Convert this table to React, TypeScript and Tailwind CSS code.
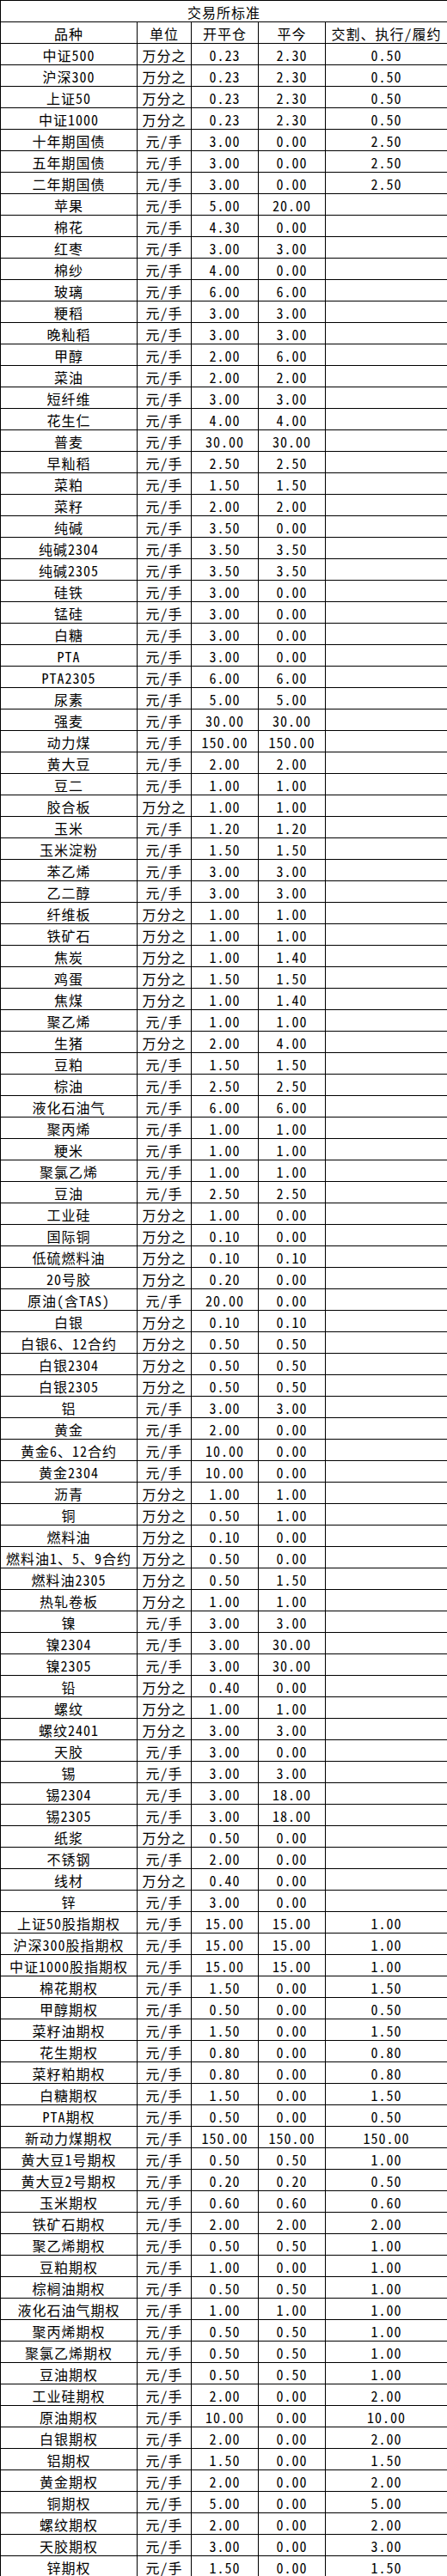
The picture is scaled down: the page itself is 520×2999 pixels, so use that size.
const rows: [string, string, string, string, string][] = [
  ["中证500", "万分之", "0.23", "2.30", "0.50"],
  ["沪深300", "万分之", "0.23", "2.30", "0.50"],
  ["上证50", "万分之", "0.23", "2.30", "0.50"],
  ["中证1000", "万分之", "0.23", "2.30", "0.50"],
  ["十年期国债", "元/手", "3.00", "0.00", "2.50"],
  ["五年期国债", "元/手", "3.00", "0.00", "2.50"],
  ["二年期国债", "元/手", "3.00", "0.00", "2.50"],
  ["苹果", "元/手", "5.00", "20.00", ""],
  ["棉花", "元/手", "4.30", "0.00", ""],
  ["红枣", "元/手", "3.00", "3.00", ""],
  ["棉纱", "元/手", "4.00", "0.00", ""],
  ["玻璃", "元/手", "6.00", "6.00", ""],
  ["粳稻", "元/手", "3.00", "3.00", ""],
  ["晚籼稻", "元/手", "3.00", "3.00", ""],
  ["甲醇", "元/手", "2.00", "6.00", ""],
  ["菜油", "元/手", "2.00", "2.00", ""],
  ["短纤维", "元/手", "3.00", "3.00", ""],
  ["花生仁", "元/手", "4.00", "4.00", ""],
  ["普麦", "元/手", "30.00", "30.00", ""],
  ["早籼稻", "元/手", "2.50", "2.50", ""],
  ["菜粕", "元/手", "1.50", "1.50", ""],
  ["菜籽", "元/手", "2.00", "2.00", ""],
  ["纯碱", "元/手", "3.50", "0.00", ""],
  ["纯碱2304", "元/手", "3.50", "3.50", ""],
  ["纯碱2305", "元/手", "3.50", "3.50", ""],
  ["硅铁", "元/手", "3.00", "0.00", ""],
  ["锰硅", "元/手", "3.00", "0.00", ""],
  ["白糖", "元/手", "3.00", "0.00", ""],
  ["PTA", "元/手", "3.00", "0.00", ""],
  ["PTA2305", "元/手", "6.00", "6.00", ""],
  ["尿素", "元/手", "5.00", "5.00", ""],
  ["强麦", "元/手", "30.00", "30.00", ""],
  ["动力煤", "元/手", "150.00", "150.00", ""],
  ["黄大豆", "元/手", "2.00", "2.00", ""],
  ["豆二", "元/手", "1.00", "1.00", ""],
  ["胶合板", "万分之", "1.00", "1.00", ""],
  ["玉米", "元/手", "1.20", "1.20", ""],
  ["玉米淀粉", "元/手", "1.50", "1.50", ""],
  ["苯乙烯", "元/手", "3.00", "3.00", ""],
  ["乙二醇", "元/手", "3.00", "3.00", ""],
  ["纤维板", "万分之", "1.00", "1.00", ""],
  ["铁矿石", "万分之", "1.00", "1.00", ""],
  ["焦炭", "万分之", "1.00", "1.40", ""],
  ["鸡蛋", "万分之", "1.50", "1.50", ""],
  ["焦煤", "万分之", "1.00", "1.40", ""],
  ["聚乙烯", "元/手", "1.00", "1.00", ""],
  ["生猪", "万分之", "2.00", "4.00", ""],
  ["豆粕", "元/手", "1.50", "1.50", ""],
  ["棕油", "元/手", "2.50", "2.50", ""],
  ["液化石油气", "元/手", "6.00", "6.00", ""],
  ["聚丙烯", "元/手", "1.00", "1.00", ""],
  ["粳米", "元/手", "1.00", "1.00", ""],
  ["聚氯乙烯", "元/手", "1.00", "1.00", ""],
  ["豆油", "元/手", "2.50", "2.50", ""],
  ["工业硅", "万分之", "1.00", "0.00", ""],
  ["国际铜", "万分之", "0.10", "0.00", ""],
  ["低硫燃料油", "万分之", "0.10", "0.10", ""],
  ["20号胶", "万分之", "0.20", "0.00", ""],
  ["原油(含TAS)", "元/手", "20.00", "0.00", ""],
  ["白银", "万分之", "0.10", "0.10", ""],
  ["白银6、12合约", "万分之", "0.50", "0.50", ""],
  ["白银2304", "万分之", "0.50", "0.50", ""],
  ["白银2305", "万分之", "0.50", "0.50", ""],
  ["铝", "元/手", "3.00", "3.00", ""],
  ["黄金", "元/手", "2.00", "0.00", ""],
  ["黄金6、12合约", "元/手", "10.00", "0.00", ""],
  ["黄金2304", "元/手", "10.00", "0.00", ""],
  ["沥青", "万分之", "1.00", "1.00", ""],
  ["铜", "万分之", "0.50", "1.00", ""],
  ["燃料油", "万分之", "0.10", "0.00", ""],
  ["燃料油1、5、9合约", "万分之", "0.50", "0.00", ""],
  ["燃料油2305", "万分之", "0.50", "1.50", ""],
  ["热轧卷板", "万分之", "1.00", "1.00", ""],
  ["镍", "元/手", "3.00", "3.00", ""],
  ["镍2304", "元/手", "3.00", "30.00", ""],
  ["镍2305", "元/手", "3.00", "30.00", ""],
  ["铅", "万分之", "0.40", "0.00", ""],
  ["螺纹", "万分之", "1.00", "1.00", ""],
  ["螺纹2401", "万分之", "3.00", "3.00", ""],
  ["天胶", "元/手", "3.00", "0.00", ""],
  ["锡", "元/手", "3.00", "3.00", ""],
  ["锡2304", "元/手", "3.00", "18.00", ""],
  ["锡2305", "元/手", "3.00", "18.00", ""],
  ["纸浆", "万分之", "0.50", "0.00", ""],
  ["不锈钢", "元/手", "2.00", "0.00", ""],
  ["线材", "万分之", "0.40", "0.00", ""],
  ["锌", "元/手", "3.00", "0.00", ""],
  ["上证50股指期权", "元/手", "15.00", "15.00", "1.00"],
  ["沪深300股指期权", "元/手", "15.00", "15.00", "1.00"],
  ["中证1000股指期权", "元/手", "15.00", "15.00", "1.00"],
  ["棉花期权", "元/手", "1.50", "0.00", "1.50"],
  ["甲醇期权", "元/手", "0.50", "0.00", "0.50"],
  ["菜籽油期权", "元/手", "1.50", "0.00", "1.50"],
  ["花生期权", "元/手", "0.80", "0.00", "0.80"],
  ["菜籽粕期权", "元/手", "0.80", "0.00", "0.80"],
  ["白糖期权", "元/手", "1.50", "0.00", "1.50"],
  ["PTA期权", "元/手", "0.50", "0.00", "0.50"],
  ["新动力煤期权", "元/手", "150.00", "150.00", "150.00"],
  ["黄大豆1号期权", "元/手", "0.50", "0.50", "1.00"],
  ["黄大豆2号期权", "元/手", "0.20", "0.20", "0.50"],
  ["玉米期权", "元/手", "0.60", "0.60", "0.60"],
  ["铁矿石期权", "元/手", "2.00", "2.00", "2.00"],
  ["聚乙烯期权", "元/手", "0.50", "0.50", "1.00"],
  ["豆粕期权", "元/手", "1.00", "0.00", "1.00"],
  ["棕榈油期权", "元/手", "0.50", "0.50", "1.00"],
  ["液化石油气期权", "元/手", "1.00", "1.00", "1.00"],
  ["聚丙烯期权", "元/手", "0.50", "0.50", "1.00"],
  ["聚氯乙烯期权", "元/手", "0.50", "0.50", "1.00"],
  ["豆油期权", "元/手", "0.50", "0.50", "1.00"],
  ["工业硅期权", "元/手", "2.00", "0.00", "2.00"],
  ["原油期权", "元/手", "10.00", "0.00", "10.00"],
  ["白银期权", "元/手", "2.00", "0.00", "2.00"],
  ["铝期权", "元/手", "1.50", "0.00", "1.50"],
  ["黄金期权", "元/手", "2.00", "0.00", "2.00"],
  ["铜期权", "元/手", "5.00", "0.00", "5.00"],
  ["螺纹期权", "元/手", "2.00", "0.00", "2.00"],
  ["天胶期权", "元/手", "3.00", "0.00", "3.00"],
  ["锌期权", "元/手", "1.50", "0.00", "1.50"],
];

const cell = "border border-black p-0 pt-[2px] text-center align-middle leading-[20px] whitespace-nowrap";

export default function App() {
  return (
    <div className="w-[520px] bg-white text-black">
      <table className="w-[520px] table-fixed border-collapse text-[16px] tracking-[1px] font-['Noto_Sans_Mono_CJK_SC','Noto_Sans_CJK_SC',sans-serif]">
        <colgroup>
          <col className="w-[159px]" />
          <col className="w-[63px]" />
          <col className="w-[78px]" />
          <col className="w-[78px]" />
          <col className="w-[142px]" />
        </colgroup>
        <thead>
          <tr className="h-[25px]">
            <th colSpan={5} className={`${cell} font-normal`}>交易所标准</th>
          </tr>
          <tr className="h-[25px]">
            <th className={`${cell} font-normal`}>品种</th>
            <th className={`${cell} font-normal`}>单位</th>
            <th className={`${cell} font-normal`}>开平仓</th>
            <th className={`${cell} font-normal`}>平今</th>
            <th className={`${cell} font-normal`}>交割、执行/履约</th>
          </tr>
        </thead>
        <tbody>
          {rows.map((r) => (
            <tr key={r[0]} className="h-[25px]">
              {r.map((v, i) => (
                <td key={i} className={cell}>{v}</td>
              ))}
            </tr>
          ))}
        </tbody>
      </table>
    </div>
  );
}
